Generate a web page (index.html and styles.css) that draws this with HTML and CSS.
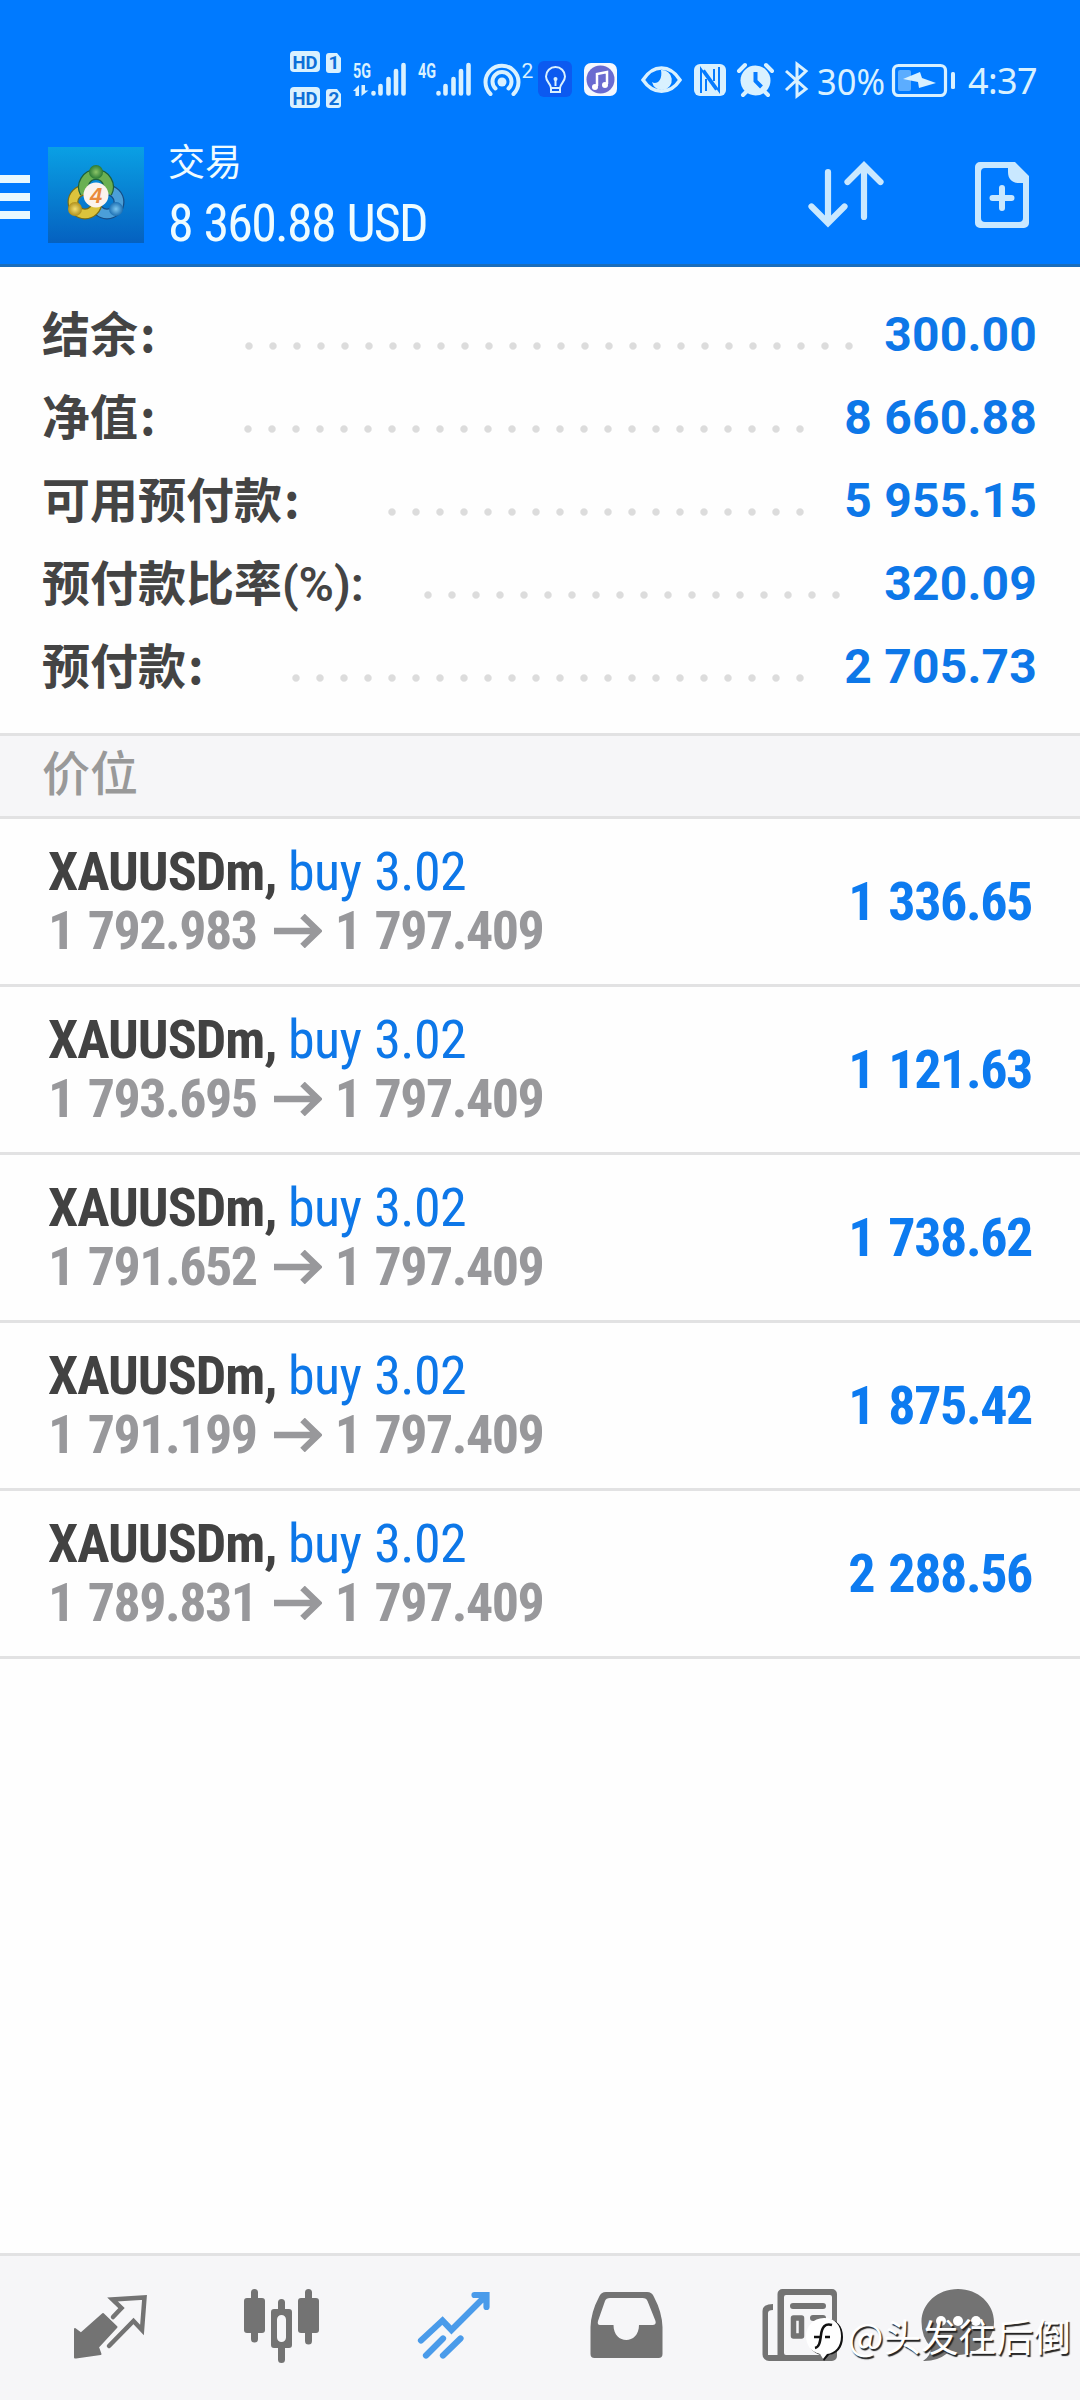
FILE: index.html
```html
<!DOCTYPE html>
<html lang="zh-CN">
<head>
<meta charset="utf-8">
<title>交易</title>
<link rel="stylesheet" href="styles.css">
</head>
<body>
<div class="app">
  <header class="top">
    <div class="status">
      <svg class="status-icons" viewBox="280 45 676 70" width="676" height="70">
        <g fill="#d9f1ff">
          <rect x="290" y="51" width="30" height="21" rx="4"/>
          <path d="M329 53h8l4 5v12a3 3 0 0 1-3 3h-9a3 3 0 0 1-3-3V56a3 3 0 0 1 3-3z"/>
          <rect x="290" y="87" width="30" height="21" rx="4"/>
          <path d="M329 89h8l4 5v11a3 3 0 0 1-3 3h-9a3 3 0 0 1-3-3V92a3 3 0 0 1 3-3z"/>
        </g>
        <g class="badge">
          <text x="292.500" y="68.500" textLength="25" lengthAdjust="spacingAndGlyphs">HD</text>
          <text x="328.500" y="69">1</text>
          <text x="292.500" y="104.500" textLength="25" lengthAdjust="spacingAndGlyphs">HD</text>
          <text x="328.500" y="105">2</text>
        </g>
        <g class="net">
          <text x="353" y="77.500" textLength="18" lengthAdjust="spacingAndGlyphs">5G</text>
          <text x="418" y="77.500" textLength="18" lengthAdjust="spacingAndGlyphs">4G</text>
        </g>
        <g stroke="#d9f1ff" stroke-width="4.600" stroke-linecap="round" fill="none">
          <path d="M373.500 93v.5M380.500 86v7.500M388.500 79v14.500M396 71v22.500M403.500 65v28.500"/>
          <path d="M438.500 93v.5M445.500 86v7.500M453.500 79v14.500M461 71v22.500M468.500 65v28.500"/>
        </g>
        <path d="M353 91l6-6v11h-3.500v-5zM361.500 85v11l7-5.500h-3.500v-5.500z" fill="#d9f1ff"/>
        <g fill="none" stroke="#d9f1ff" stroke-width="4" stroke-linecap="round">
          <path d="M490.500 94a16.500 16.500 0 1 1 23 0"/>
          <path d="M495.500 88.500a9.500 9.500 0 1 1 13 0"/>
        </g>
        <circle cx="502" cy="82" r="4.500" fill="#d9f1ff"/>
        <text class="sup" x="521.500" y="78">2</text>
        <rect x="538" y="61" width="34" height="36" rx="6" fill="#0c5af0"/>
        <path d="M551 88c0-4-5-6-5-11.500a9.500 9.500 0 0 1 19 0c0 5.500-5 7.500-5 11.500zM551 88v4h9v-4M555.500 86v-7" fill="none" stroke="#d9f1ff" stroke-width="2"/>
        <circle cx="555.500" cy="79" r="2" fill="#d9f1ff"/>
        <rect x="584" y="63" width="33" height="33" rx="7" fill="#f4f8ff"/>
        <circle cx="600.500" cy="79.500" r="14" fill="#6a6bd0"/>
        <path d="M597 86V74l10-2v12" fill="none" stroke="#fff" stroke-width="2.500"/>
        <circle cx="595" cy="87" r="3" fill="#fff"/><circle cx="605" cy="85" r="3" fill="#fff"/>
        <path d="M643 80c10-16 27-16 37 0c-10 15-27 15-37 0z" fill="none" stroke="#d9f1ff" stroke-width="3.500"/>
        <path d="M661 70a10 10 0 1 1-9 12c4 3 11-1 9-12z" fill="#d9f1ff"/>
        <rect x="694" y="64" width="32" height="32" rx="6" fill="#d9f1ff"/>
        <path d="M701 93V69l15 21M719 67v24l-15-21M706 91V79M714 69v12" fill="none" stroke="#067bff" stroke-width="2"/>
        <circle cx="755.500" cy="80.500" r="15" fill="#d9f1ff"/>
        <path d="M739 71l6-6M772 71l-6-6M743 95l4-4M768 95l-4-4" stroke="#d9f1ff" stroke-width="4" stroke-linecap="round"/>
        <path d="M755.500 72v9l6 6" fill="none" stroke="#067bff" stroke-width="4"/>
        <path d="M786 71l20 18-9 7V64l9 7-20 19" fill="none" stroke="#d9f1ff" stroke-width="3"/>
        <text class="clock" x="817" y="95" textLength="68" lengthAdjust="spacingAndGlyphs">30%</text>
        <rect x="893.500" y="65.500" width="52" height="30" rx="5" fill="none" stroke="#d9f1ff" stroke-width="3.200"/>
        <rect x="898" y="70" width="13" height="21" rx="2" fill="#5cadff"/>
        <path d="M903 79l17-7 2 6 14 5-17 5-1-6z" fill="#d9f1ff"/>
        <rect x="951" y="72" width="4" height="17" rx="1.500" fill="#d9f1ff"/>
      </svg>
      <span class="time">4:37</span>
    </div>
    <div class="toolbar">
      <svg class="menu" viewBox="0 0 30 46" width="30" height="46"><path d="M0 4h30M0 22h30M0 40h30" stroke="#e8f8ff" stroke-width="8"/></svg>
      <svg class="logo" viewBox="0 0 96 96" width="96" height="96">
        <defs>
          <linearGradient id="bg" x1="0" y1="0" x2="0" y2="1"><stop offset="0" stop-color="#0aa0e4"/><stop offset="1" stop-color="#0561c0"/></linearGradient>
          <radialGradient id="gr"><stop offset="0" stop-color="#8cc568"/><stop offset="1" stop-color="#2a7a35"/></radialGradient>
          <radialGradient id="ye"><stop offset="0" stop-color="#f3df72"/><stop offset="1" stop-color="#b0901c"/></radialGradient>
          <radialGradient id="bl"><stop offset="0" stop-color="#7cc6ef"/><stop offset="1" stop-color="#1d70b4"/></radialGradient>
        </defs>
        <rect width="96" height="96" fill="url(#bg)"/>
        <g fill="none">
          <circle cx="59" cy="55" r="12" stroke="#164d86" stroke-width="11"/>
          <circle cx="59" cy="55" r="12" stroke="#4b9fd8" stroke-width="8.500"/>
          <circle cx="37" cy="55" r="12" stroke="#776c18" stroke-width="11"/>
          <circle cx="37" cy="55" r="12" stroke="#dcc33c" stroke-width="8.500"/>
          <path d="M37 46a12.500 12.500 0 1 1 22 0" stroke="#1d5f3c" stroke-width="11"/>
          <path d="M37 46a12.500 12.500 0 1 1 22 0" stroke="#6bb052" stroke-width="8.500"/>
        </g>
        <circle cx="48" cy="25" r="7" fill="url(#gr)"/>
        <circle cx="27" cy="62" r="7" fill="url(#ye)"/>
        <circle cx="68" cy="62" r="7" fill="url(#bl)"/>
        <circle cx="48" cy="48" r="12.500" fill="#fbf3ee"/>
        <text class="four" x="42" y="56">4</text>
      </svg>
      <div class="title">
        <span class="name">交易</span>
        <span class="sum cond">8 360.88 USD</span>
      </div>
      <svg class="sort" viewBox="806 160 78 70" width="78" height="70">
        <path d="M828 172v51M811.500 206.500L828 223l16.500-16.500M864 217v-51M847.500 182L864 165.500 880.500 182" fill="none" stroke="#c9e8ff" stroke-width="6.200" stroke-linecap="round"/>
      </svg>
      <svg class="add" viewBox="974 160 56 70" width="56" height="70">
        <path fill-rule="evenodd" d="M980 162h35l14 14v47a5 5 0 0 1-5 5h-44a5 5 0 0 1-5-5v-56a5 5 0 0 1 5-5zM985 168a4 4 0 0 0-4 4v46a4 4 0 0 0 4 4h34a4 4 0 0 0 4-4V183h-4c-7 0-11-4-11-11v-4z" fill="#c9e8ff"/>
        <path d="M1002 188v20M992.500 198h19" stroke="#c9e8ff" stroke-width="6" stroke-linecap="round"/>
      </svg>
    </div>
  </header>

  <section class="account">
    <div class="line"><span class="label">结余<span class="colon">:</span></span><i class="dots d1"></i><b class="val">300.00</b></div>
    <div class="line"><span class="label">净值<span class="colon">:</span></span><i class="dots d2"></i><b class="val">8 660.88</b></div>
    <div class="line"><span class="label">可用预付款<span class="colon">:</span></span><i class="dots d3"></i><b class="val">5 955.15</b></div>
    <div class="line"><span class="label">预付款比率<span class="latin">(%):</span></span><i class="dots d4"></i><b class="val">320.09</b></div>
    <div class="line"><span class="label">预付款<span class="colon">:</span></span><i class="dots d5"></i><b class="val">2 705.73</b></div>
  </section>

  <h2 class="section">价位</h2>

  <main class="orders">
    <div class="order"><div><div class="cond sym">XAUUSDm, <span>buy 3.02</span></div><div class="cond px">1 792.983<svg viewBox="0 0 48 34" width="48" height="34"><path d="M0 17h44M28.500 2L44 17 28.500 32"/></svg>1 797.409</div></div><b class="cond pl">1 336.65</b></div>
    <div class="order"><div><div class="cond sym">XAUUSDm, <span>buy 3.02</span></div><div class="cond px">1 793.695<svg viewBox="0 0 48 34" width="48" height="34"><path d="M0 17h44M28.500 2L44 17 28.500 32"/></svg>1 797.409</div></div><b class="cond pl">1 121.63</b></div>
    <div class="order"><div><div class="cond sym">XAUUSDm, <span>buy 3.02</span></div><div class="cond px">1 791.652<svg viewBox="0 0 48 34" width="48" height="34"><path d="M0 17h44M28.500 2L44 17 28.500 32"/></svg>1 797.409</div></div><b class="cond pl">1 738.62</b></div>
    <div class="order"><div><div class="cond sym">XAUUSDm, <span>buy 3.02</span></div><div class="cond px">1 791.199<svg viewBox="0 0 48 34" width="48" height="34"><path d="M0 17h44M28.500 2L44 17 28.500 32"/></svg>1 797.409</div></div><b class="cond pl">1 875.42</b></div>
    <div class="order"><div><div class="cond sym">XAUUSDm, <span>buy 3.02</span></div><div class="cond px">1 789.831<svg viewBox="0 0 48 34" width="48" height="34"><path d="M0 17h44M28.500 2L44 17 28.500 32"/></svg>1 797.409</div></div><b class="cond pl">2 288.56</b></div>
  </main>

  <nav class="tabs">
    <svg viewBox="70 2285 80 80" width="80" height="80">
      <path d="M75 2329l6 4.500 22-19.500 13.500 13-18.500 20 2.500 7-24.500 3.500h-1z" fill="#737373" stroke="#737373" stroke-width="2" stroke-linejoin="round"/>
      <path d="M113 2317l8.500-9-9-8.500 32-2-2.500 32.500-8.500-9-24.500 25" fill="none" stroke="#737373" stroke-width="4.500" stroke-linecap="round"/>
    </svg>
    <svg viewBox="242 2285 80 80" width="80" height="80">
      <g fill="#737373"><rect x="244" y="2298" width="21" height="35" rx="3"/><rect x="298" y="2298" width="21" height="35" rx="3"/>
      <path fill-rule="evenodd" d="M274 2309h15a3 3 0 0 1 3 3v33a3 3 0 0 1-3 3h-15a3 3 0 0 1-3-3v-33a3 3 0 0 1 3-3zM281.500 2315a4.500 4.500 0 0 0-4.500 4.500v18a4.500 4.500 0 0 0 9 0v-18a4.500 4.500 0 0 0-4.500-4.500z"/></g>
      <path d="M254.500 2292.500V2339M308.500 2292.500V2341M281.500 2302.500v8M281.500 2346v13.500" stroke="#737373" stroke-width="7" stroke-linecap="round"/>
    </svg>
    <svg viewBox="414 2285 80 80" width="80" height="80">
      <path d="M421 2340.500l21.500-20 9 9.500 34-34M474.500 2295h12v12M426 2355.500l17-17M443 2355.500l17.500-17" fill="none" stroke="#4a9bea" stroke-width="6.200" stroke-linecap="round"/>
    </svg>
    <svg viewBox="586 2285 80 80" width="80" height="80">
      <path fill-rule="evenodd" d="M606 2292h41q5 0 7 5q8 15 8.500 30v27q0 4-4 4h-64q-4 0-4-4v-27q.5-15 8.500-30q2-5 7-5zM610 2298q-4 0-5 3l-7 20q-1 4 2 4h13.500c0 20 25.500 20 25.500 0h13.500q4 0 3-4l-8-20q-1-3-5-3z" fill="#737373"/>
    </svg>
    <svg viewBox="758 2285 80 80" width="80" height="80">
      <path fill-rule="evenodd" d="M782 2289h50a5 5 0 0 1 5 5v62a5 5 0 0 1-5 5h-63a6.500 6.500 0 0 1-6.500-6.500V2311q0-7 10.500-7v6q-5 0-5 3v42h9.500v-61a5 5 0 0 1 5-5zM786 2295a2 2 0 0 0-2 2v56a2 2 0 0 0 2 2h44a2 2 0 0 0 2-2v-56a2 2 0 0 0-2-2z" fill="#737373"/>
      <path d="M793 2306h30M813 2318h10" stroke="#737373" stroke-width="6" stroke-linecap="round"/>
      <path d="M793.500 2318h8v18h-8z" fill="none" stroke="#737373" stroke-width="5.500" stroke-linejoin="round"/>
    </svg>
    <svg viewBox="917 2285 80 80" width="80" height="80">
      <path d="M958 2289c20 0 36 14.500 36 33s-16 33-36 33q-6 0-11-1.500q-10 8-24 7.500q8-5 8-14q-9.500-9.500-9.500-25c0-18.500 16-33 36.500-33z" fill="#737373"/>
      <g fill="#fff"><circle cx="941" cy="2321" r="5"/><circle cx="958" cy="2321" r="5"/><circle cx="976" cy="2321" r="5"/></g>
    </svg>
  </nav>

  <div class="watermark">
    <svg viewBox="0 0 42 46" width="42" height="46">
      <path d="M22 3c11 0 17 7 17 18s-6 17-14 18l-5 6-3-6C8 37 4 30 4 21S10 3 22 3z" fill="#111"/>
      <path d="M20 2c11 0 17 7 17 18s-6 17-14 18l-4 5-3-5C7 36 2 29 2 20S9 2 20 2z" fill="#fff"/>
      <path d="M28 9c-7-2-10 2-11 10s-2 12-6 13M10 21h7M21 21h5" fill="none" stroke="#111" stroke-width="2.500"/>
    </svg>
    <span>@头发往后倒</span>
  </div>
</div>
</body>
</html>
```
FILE: styles.css
```css
* { box-sizing: border-box; }
body { margin: 0; background: #fff; font-family: Roboto, "Noto Sans CJK SC", sans-serif; }
.app { position: relative; width: 1080px; height: 2400px; display: flex; flex-direction: column; background: #fefefe; overflow: hidden; }
svg { display: block; flex: none; }
.cond { font-family: "Roboto Condensed", Roboto, sans-serif; font-stretch: 75%; }

.top { height: 267px; background: #007aff; border-bottom: 3px solid #1a6dbb; }
.status { display: flex; height: 115px; padding: 45px 0 0 280px; }
.status text { font-family: Roboto, sans-serif; fill: #d9f1ff; }
.status .badge text { font-size: 19px; font-weight: 700; fill: #0d6fd8; }
.status .net text { font-size: 21px; font-weight: 700; }
.status .sup { font-size: 21px; }
.status .clock { font-family: "Noto Sans", sans-serif; font-size: 36px; }
.time { margin-left: 12px; font: 36px/71px "Noto Sans", sans-serif; color: #d9f1ff; letter-spacing: -.6px; }
.toolbar { display: flex; height: 149px; padding-top: 32px; }
.menu { margin-top: 28px; }
.logo { margin-left: 18px; }
.four { font: italic 700 22px "Liberation Sans", sans-serif; fill: #e98a3c; }
.title { display: flex; flex-direction: column; width: 300px; margin: -9px 0 0 24px; color: #effcff; }
.name { font: 37px/44px "Noto Sans CJK SC", sans-serif; }
.sum { font-size: 52px; line-height: 60px; margin-top: 12px; white-space: nowrap; letter-spacing: -1.8px; word-spacing: 1.5px; }
.sort { margin: 13px 0 0 338px; }
.add { margin: 13px 0 0 90px; }

.account { height: 466px; padding: 26px 43px 0 42px; }
.line { display: flex; height: 83px; align-items: center; }
.label { margin-top: -6px; font: 700 48px/83px "Noto Sans CJK SC", sans-serif; color: #444; white-space: nowrap; }
.colon { margin-left: 2px; }
.latin { font-family: Roboto, sans-serif; font-weight: 600; font-size: 48px; line-height: 1; letter-spacing: -.1px; }
.dots { height: 8px; margin: 23px 0 0 auto; background: radial-gradient(circle, #dcdcdc 3.2px, transparent 4.2px) 0 0 / 24px 8px repeat-x; }
.d1 { width: 624px; margin-right: 23px; }
.d2, .d3, .d5 { width: 576px; margin-right: 32px; }
.d3 { width: 432px; }
.d4 { width: 432px; margin-right: 36px; }
.d5 { width: 528px; }
.val { font-size: 48px; font-weight: 700; line-height: 83px; color: #0d77e8; letter-spacing: .2px; }

.section { flex: none; height: 86px; margin: 0; padding-left: 42px; border: solid #e2e2e3; border-width: 3px 0; background: #f6f6f8; font: 500 48px/68px "Noto Sans CJK SC", sans-serif; color: #999; }
.order { display: flex; justify-content: space-between; height: 168px; padding: 23px 48px 0 48px; border-bottom: 3px solid #e2e2e3; }
.sym { font-size: 54px; line-height: 59px; font-weight: 700; color: #424242; white-space: nowrap; letter-spacing: -1px; word-spacing: 0; }
.sym span { font-weight: 400; color: #0d77e8; letter-spacing: -.6px; word-spacing: 1px; }
.px { display: flex; font-size: 54px; line-height: 59px; font-weight: 700; color: #98989b; white-space: pre; letter-spacing: -1.5px; word-spacing: 3px; }
.px svg { margin: 13px 13px 0 17px; fill: none; stroke: #98989b; stroke-width: 6.500; }
.pl { font-size: 54px; line-height: 120px; color: #0d7bf0; letter-spacing: -1.4px; word-spacing: 3px; }

.tabs { display: flex; height: 147px; margin-top: auto; padding: 29px 0 0 70px; gap: 92px; background: #f6f6f8; border-top: 3px solid #e2e2e3; }
.tabs svg:last-child { margin-left: -13px; }
.watermark { position: absolute; left: 804px; top: 2316px; display: flex; color: #fff; }
.watermark span { font: 37.500px/38px "Noto Sans CJK SC", sans-serif; margin-left: 2px; white-space: nowrap; text-shadow: 1.500px 1.500px 1px #222; }
```
